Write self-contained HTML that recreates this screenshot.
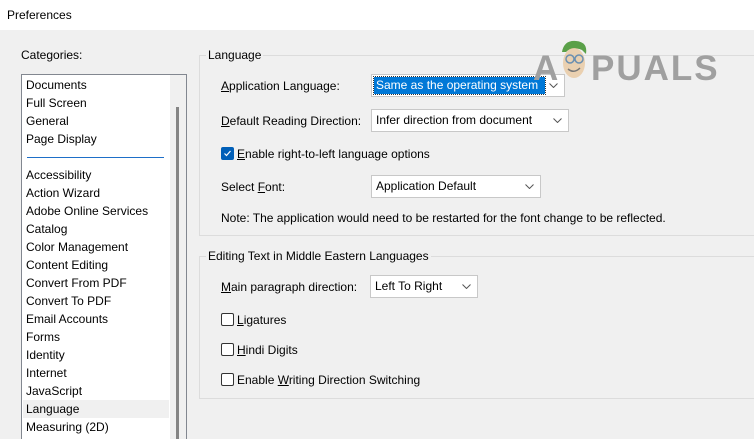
<!DOCTYPE html>
<html style="overflow:hidden;width:754px;height:439px"><head><style>
*{margin:0;padding:0;box-sizing:border-box}
body{width:754px;height:439px;background:#f0f0f0;font-family:"Liberation Sans",sans-serif;font-size:12px;color:#000;position:relative;overflow:hidden}
.a{position:absolute;white-space:nowrap}
.title{left:0;top:0;width:754px;height:30px;background:#fff}
.list{left:21px;top:74px;width:166px;height:366px;background:#fff;border:1px solid #828790;border-bottom:none;overflow:hidden}
.it{position:absolute;left:4px;height:18px;line-height:18px}
.dd{position:absolute;background:#fff;border:1px solid #c8c8c8;height:23px;line-height:21px;padding-left:4px}
.dd svg{position:absolute;right:6px;top:8px}
.grp{position:absolute;border:1px solid #dcdcdc;border-right:none}
.gl{position:absolute;background:#f0f0f0;padding:0 2px;line-height:14px}
.cb{position:absolute;width:13px;height:13px;border:1px solid #333;border-radius:2px;background:#fff}
u{text-decoration:underline}
</style></head><body>
<div class="a title"></div>
<div class="a" style="left:7px;top:8px">Preferences</div>
<div class="a" style="left:21px;top:48px">Categories:</div>
<div class="a list">
<div class="it" style="top:1px">Documents</div>
<div class="it" style="top:19px">Full Screen</div>
<div class="it" style="top:37px">General</div>
<div class="it" style="top:55px">Page Display</div>
<div style="position:absolute;left:5px;top:82px;width:137px;height:1px;background:#1e6fc8"></div>
<div class="it" style="top:91px">Accessibility</div>
<div class="it" style="top:109px">Action Wizard</div>
<div class="it" style="top:127px">Adobe Online Services</div>
<div class="it" style="top:145px">Catalog</div>
<div class="it" style="top:163px">Color Management</div>
<div class="it" style="top:181px">Content Editing</div>
<div class="it" style="top:199px">Convert From PDF</div>
<div class="it" style="top:217px">Convert To PDF</div>
<div class="it" style="top:235px">Email Accounts</div>
<div class="it" style="top:253px">Forms</div>
<div class="it" style="top:271px">Identity</div>
<div class="it" style="top:289px">Internet</div>
<div class="it" style="top:307px">JavaScript</div>
<div style="position:absolute;left:1px;top:325px;width:146px;height:18px;background:#f0f0f0"></div>
<div class="it" style="top:325px">Language</div>
<div class="it" style="top:343px">Measuring (2D)</div>
<div style="position:absolute;left:148px;top:0;width:16px;height:380px;background:#f0f0f0"></div>
<div style="position:absolute;left:154px;top:32px;width:3px;height:350px;background:#858585"></div>
</div>

<div class="grp" style="left:199px;top:55px;width:560px;height:181px"></div>
<div class="gl" style="left:206px;top:48px">Language</div>
<div class="grp" style="left:199px;top:256px;width:560px;height:143px"></div>
<div class="gl" style="left:206px;top:249px">Editing Text in Middle Eastern Languages</div>

<div class="a" style="left:221px;top:79px"><u>A</u>pplication Language:</div>
<div class="dd" style="left:371px;top:74px;width:194px"><span style="background:#0078d7;color:#fff;display:inline-block;width:171px;height:17px;line-height:17px;margin-left:-2px;padding-left:2px;outline:1px dotted #333">Same as the operating system</span><svg width="9" height="5"><path d="M0.5 0.5L4.5 4.5L8.5 0.5" fill="none" stroke="#555"/></svg></div>
<div class="a" style="left:221px;top:114px"><u>D</u>efault Reading Direction:</div>
<div class="dd" style="left:371px;top:109px;width:198px">Infer direction from document<svg width="9" height="5"><path d="M0.5 0.5L4.5 4.5L8.5 0.5" fill="none" stroke="#555"/></svg></div>
<div class="cb" style="left:221px;top:147px;background:#005fb8;border-color:#005fb8"><svg width="11" height="11" style="position:absolute;left:0;top:0"><path d="M2.5 5.5L4.5 7.5L8.5 3" fill="none" stroke="#fff" stroke-width="1.2"/></svg></div>
<div class="a" style="left:237px;top:147px"><u>E</u>nable right-to-left language options</div>
<div class="a" style="left:221px;top:180px">Select <u>F</u>ont:</div>
<div class="dd" style="left:371px;top:175px;width:170px">Application Default<svg width="9" height="5"><path d="M0.5 0.5L4.5 4.5L8.5 0.5" fill="none" stroke="#555"/></svg></div>
<div class="a" style="left:221px;top:211px">Note: The application would need to be restarted for the font change to be reflected.</div>

<div class="a" style="left:221px;top:280px"><u>M</u>ain paragraph direction:</div>
<div class="dd" style="left:370px;top:275px;width:108px">Left To Right<svg width="9" height="5"><path d="M0.5 0.5L4.5 4.5L8.5 0.5" fill="none" stroke="#555"/></svg></div>
<div class="cb" style="left:221px;top:313px"></div>
<div class="a" style="left:237px;top:313px"><u>L</u>igatures</div>
<div class="cb" style="left:221px;top:343px"></div>
<div class="a" style="left:237px;top:343px"><u>H</u>indi Digits</div>
<div class="cb" style="left:221px;top:373px"></div>
<div class="a" style="left:237px;top:373px">Enable <u>W</u>riting Direction Switching</div>

<div class="a" style="left:533px;top:50px;font-size:35px;font-weight:bold;color:#a0a0a0;line-height:38px">A</div>
<svg class="a" style="left:556px;top:38px" width="36" height="44"><path d="M6 14Q8 2 20 3Q32 4 30 16L26 12Q16 8 10 14Z" fill="#5aa048"/><ellipse cx="18" cy="25" rx="11" ry="15" fill="#e8c8a0" opacity=".8"/><circle cx="14" cy="21" r="4" fill="none" stroke="#6b8fb0" stroke-width="1.5"/><circle cx="23" cy="21" r="4" fill="none" stroke="#6b8fb0" stroke-width="1.5"/><path d="M12 31Q18 36 24 30" fill="none" stroke="#777" stroke-width="1.5"/></svg>
<div class="a" style="left:591px;top:50px;font-size:35px;font-weight:bold;color:#a0a0a0;letter-spacing:2px;line-height:38px">PUALS</div>
</body></html>
